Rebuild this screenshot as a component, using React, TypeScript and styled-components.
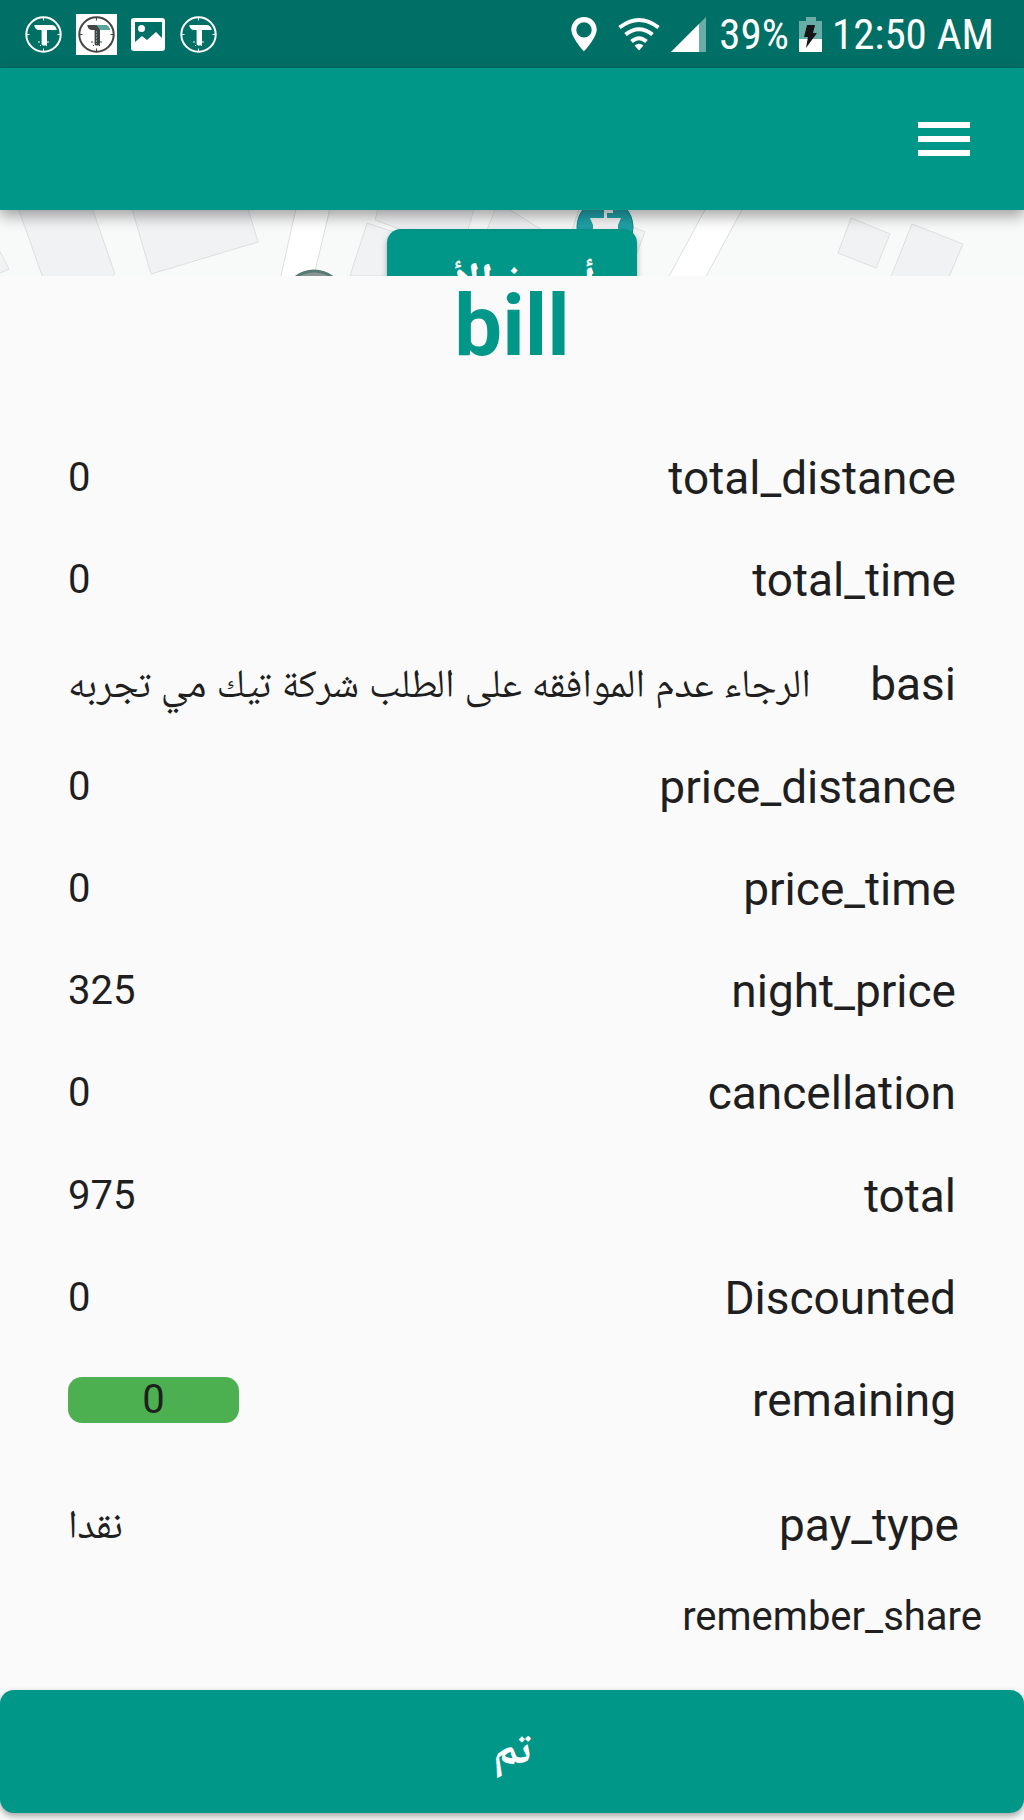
import React from "react";
import styled, { createGlobalStyle } from "styled-components";

const teal = "#009688";
const ink = "#1f1f1f";

const GlobalStyle = createGlobalStyle`
  *, *::before, *::after { box-sizing: border-box; }
  body {
    margin: 0;
    background: #fafafa;
    color: ${ink};
    font-family: Roboto, "Noto Naskh Arabic UI", "Noto Naskh Arabic", "Noto Sans Arabic", "DejaVu Sans", sans-serif;
  }
`;

const Screen = styled.div`
  display: flex;
  flex-direction: column;
  min-height: 100vh;
`;

const StatusBar = styled.div`
  display: flex;
  align-items: center;
  justify-content: space-between;
  height: 68px;
  padding: 0 30px 0 25px;
  background: #006f65;
  color: #fff;
  font: 400 43px/68px "Roboto Condensed", Roboto, sans-serif;
`;

const StatusGroup = styled.div<{ $gap: number }>`
  display: flex;
  align-items: center;
  gap: ${(p) => p.$gap}px;

  svg { display: block; flex: none; }
`;

const AppBar = styled.header`
  position: relative;
  z-index: 1;
  display: flex;
  align-items: center;
  justify-content: flex-end;
  height: 142px;
  padding: 2px 44px 0;
  background: ${teal};
  box-shadow: 0 6px 14px rgba(0, 0, 0, 0.36);
`;

const MenuButton = styled.button`
  display: flex;
  align-items: center;
  justify-content: center;
  width: 72px;
  height: 72px;
  padding: 0;
  border: 0;
  background: none;
  color: #fff;
`;

const MapStrip = styled.section`
  position: relative;
  height: 66px;
  overflow: hidden;
  background: #f8faf9;
`;

const MapDrawing = styled.svg`
  display: block;
  width: 100%;
  height: 100%;
`;

const MapAction = styled.button`
  position: absolute;
  top: 19px;
  left: 50%;
  width: 250px;
  height: 108px;
  margin-left: -125px;
  padding: 0;
  border: 0;
  border-radius: 14px;
  background: ${teal};
  box-shadow: 0 3px 6px rgba(0, 0, 0, 0.3);
  color: #fff;
  font: inherit;
  font-size: 46px;
  font-weight: 700;
`;

const Bill = styled.main`
  display: flex;
  flex: 1;
  flex-direction: column;
`;

const Title = styled.h1`
  margin: 0;
  color: ${teal};
  font-size: 85px;
  font-weight: 700;
  line-height: 100px;
  text-align: center;
`;

const Items = styled.dl`
  display: flex;
  flex: 1;
  flex-direction: column;
  margin: 51px 0 0;
`;

const Item = styled.div<{ $inset?: number }>`
  display: flex;
  flex: 1;
  flex-direction: row-reverse;
  align-items: center;
  justify-content: space-between;
  padding: 0 ${(p) => p.$inset ?? 68}px 0 68px;
`;

const Label = styled.dt`
  font-size: 46px;
  line-height: 54px;
`;

const Value = styled.dd`
  margin: 0;
  font-size: 40px;
  line-height: 46px;
`;

const ArabicValue = styled(Value)`
  padding-top: 10px;
`;

const Remaining = styled(Value)`
  width: 171px;
  border-radius: 14px;
  background: #4caf50;
  text-align: center;
`;

const Payment = styled.dl`
  display: flex;
  height: 143px;
  margin: 0;
  padding-top: 4px;
`;

const Note = styled.p`
  margin: 0;
  padding: 0 42px;
  font-size: 40px;
  line-height: 46px;
  text-align: right;
`;

const DoneButton = styled.button`
  height: 123px;
  margin: 50px 0 7px;
  padding: 0;
  border: 0;
  border-radius: 14px;
  background: ${teal};
  box-shadow: 0 3px 6px rgba(0, 0, 0, 0.35);
  color: #fff;
  font: inherit;
  font-size: 46px;
  font-weight: 700;
`;

function BrandIcon({ boxed = false }: { boxed?: boolean }) {
  const line = boxed ? "#444" : "#fff";
  return (
    <svg width={boxed ? 41 : 37} height={boxed ? 41 : 37} viewBox={boxed ? "-2 -2 41 41" : "0 0 37 37"} aria-hidden="true">
      {boxed && <rect x="-2" y="-2" width="41" height="41" fill="#fff" />}
      <circle cx="18.500" cy="18.500" r="17.200" fill="none" stroke={line} strokeWidth="2" />
      <path d="M18.500 1v3.500M18.500 32.500V36M1 18.500h3.500M32.500 18.500H36" stroke={line} strokeWidth="1" />
      <path d="M9.300 9h17c3 0 5 1.500 5.500 5h-9.800v14c0 2-5.400 2-5.400 0V14h-2.300C11.500 14 9.500 12.500 9.300 9z" fill={line} />
      {boxed && <path d="M18.500 9h8c3 0 5 1.500 5.300 5h-9.800z" fill="#5aa79e" />}
      {boxed && <path d="M18.500 15v13" stroke="#5aa79e" strokeWidth="1" strokeDasharray="2 1" />}
      <path d="M14 25v2M23 25v2M15 29.500h1M21 29.500h1" fill="none" stroke={line} strokeWidth="1" />
    </svg>
  );
}

const items: { label: string; value: string; arabic?: boolean }[] = [
  { label: "total_distance", value: "0" },
  { label: "total_time", value: "0" },
  { label: "basi", value: "الرجاء عدم الموافقه على الطلب شركة تيك مي تجربه", arabic: true },
  { label: "price_distance", value: "0" },
  { label: "price_time", value: "0" },
  { label: "night_price", value: "325" },
  { label: "cancellation", value: "0" },
  { label: "total", value: "975" },
  { label: "Discounted", value: "0" },
];

export default function App() {
  return (
    <Screen>
      <GlobalStyle />
      <StatusBar>
        <StatusGroup $gap={14}>
          <BrandIcon />
          <BrandIcon boxed />
          <svg width="35" height="33" viewBox="0 0 35 33" aria-hidden="true">
            <path fillRule="evenodd" fill="#fff" d="M3 0h28a3 3 0 0 1 3 3v27a3 3 0 0 1-3 3H3a3 3 0 0 1-3-3V3a3 3 0 0 1 3-3zm1 4v20l7-6 5 4 9-8 6 6V4z" />
            <circle cx="10.500" cy="10.500" r="3.500" fill="#fff" />
          </svg>
          <BrandIcon />
        </StatusGroup>
        <StatusGroup $gap={10}>
          <svg width="138" height="35" viewBox="570 16 138 35" aria-hidden="true">
            <path fillRule="evenodd" fill="#fff" d="M583 16c-7.200 0-12.700 5.500-12.700 12.600C570.300 37 583 50.500 583 50.500S595.700 37 595.700 28.600C595.700 21.500 590.200 16 583 16zm0 5.200a7.700 7.700 0 1 1 0 15.400a7.700 7.700 0 1 1 0-15.400z" />
            <g fill="none" stroke="#fff" strokeWidth="4">
              <path d="M618.500 26.500Q638 11.500 657.500 26.500" />
              <path d="M624.500 33.500Q638 23 651.500 33.500" />
              <path d="M630.500 40.500Q638 34 645.500 40.500" />
            </g>
            <path d="M633.500 44.500Q638 41 642.500 44.500L638 49.500z" fill="#fff" />
            <path d="M670 51L705 16V51z" fill="#68ada7" />
            <path d="M670 51L698 23V51z" fill="#fff" />
          </svg>
          <span>39%</span>
          <svg width="23" height="35" viewBox="0 0 23 35" aria-hidden="true">
            <path d="M7 0h10v4h6v31H0V4h7z" fill="#68ada7" />
            <path d="M0 22h23v13H0z" fill="#fff" />
            <path d="M8 8h8l-2 8h4L7 31l2-11H5z" fill="#151515" />
          </svg>
          <span>12:50 AM</span>
        </StatusGroup>
      </StatusBar>
      <AppBar>
        <MenuButton aria-label="Menu">
          <svg width="52" height="36" viewBox="0 0 52 36" aria-hidden="true">
            <path d="M0 0h52v6H0zM0 14h52v6H0zM0 28h52v6H0z" fill="currentColor" />
          </svg>
        </MenuButton>
      </AppBar>
      <MapStrip>
        <MapDrawing viewBox="0 0 1024 66" preserveAspectRatio="xMidYMin slice" aria-hidden="true">
          <g fill="#f1f2f4" stroke="#dedfdf" strokeWidth="1">
            <path d="M-6 30L9 59L-6 66z" />
            <path d="M16 -8L43 68H110L115 64L90 -8z" />
            <path d="M130 -8L151 64L258 32L246 -8z" />
            <path d="M350 66L367 13L400 24V66z" />
            <path d="M380 -8L375 10L402 20H468L476 -8z" />
            <path d="M487 20L498 -8L542 20z" />
            <path d="M572 20L580 -4L645 22L636 45z" />
            <path d="M851 8L890 24L876 58L838 43z" />
            <path d="M912 14L963 34L946 74H888z" />
          </g>
          <path d="M297 -6L280 70H313L331 -6z" fill="#fff" />
          <path d="M297 -6L280 70M331 -6L313 70" fill="none" stroke="#dedfdf" />
          <path d="M707 -4L666 72H703L744 -4z" fill="#fff" stroke="#dedfdf" />
          <circle cx="314" cy="91" r="30" fill="#8b9591" stroke="#557b74" strokeWidth="3" />
          <circle cx="605" cy="17" r="28" fill="#1fa2a8" stroke="#008b87" strokeWidth="1" />
          <path d="M604 0h9v3h-6v5h14l-3 7v10h-25V15l-3-7h14z" fill="#f4f4f4" />
        </MapDrawing>
        <MapAction>أحجز الأن</MapAction>
      </MapStrip>
      <Bill>
        <Title>bill</Title>
        <Items>
          {items.map(({ label, value, arabic }) => (
            <Item key={label}>
              <Label>{label}</Label>
              {arabic ? <ArabicValue dir="rtl">{value}</ArabicValue> : <Value>{value}</Value>}
            </Item>
          ))}
          <Item>
            <Label>remaining</Label>
            <Remaining>0</Remaining>
          </Item>
        </Items>
        <Payment>
          <Item $inset={65}>
            <Label>pay_type</Label>
            <ArabicValue dir="rtl">نقدا</ArabicValue>
          </Item>
        </Payment>
        <Note>remember_share</Note>
        <DoneButton>تم</DoneButton>
      </Bill>
    </Screen>
  );
}
